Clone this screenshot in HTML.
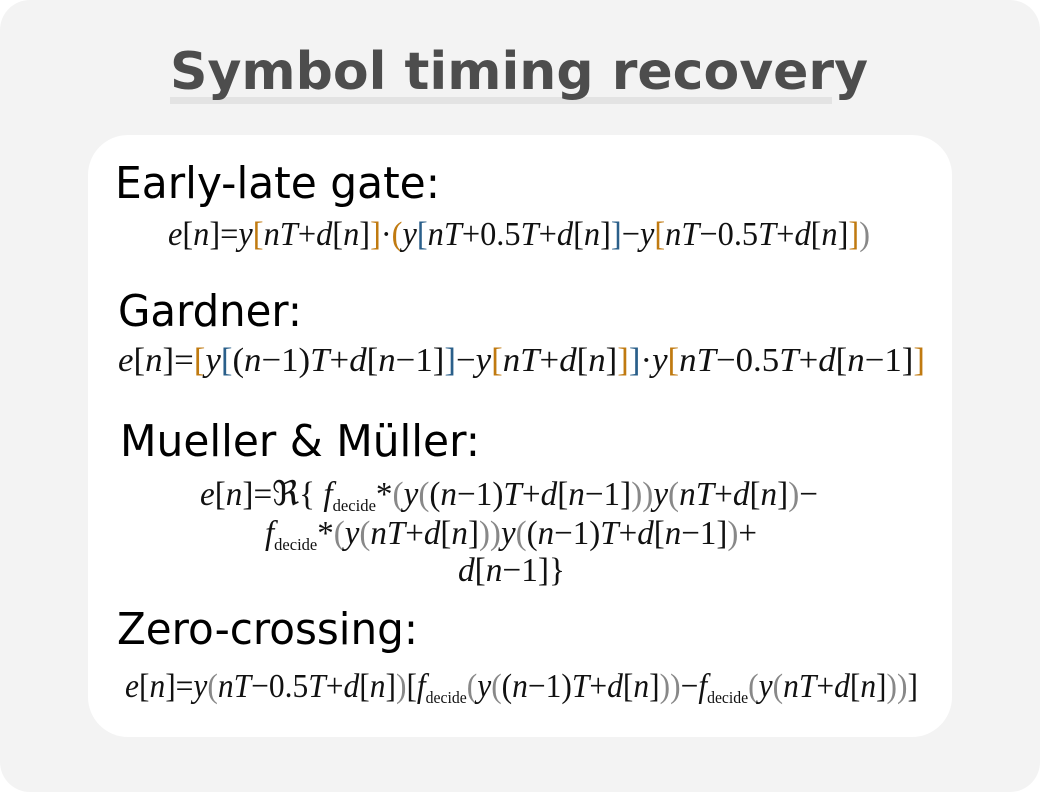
<!DOCTYPE html>
<html><head><meta charset="utf-8"><style>
html,body{margin:0;padding:0;background:#fff}
#bg{position:relative;width:1040px;height:792px;background:#f3f3f3;border-radius:30px;overflow:hidden}
#card{position:absolute;left:88px;top:135px;width:864px;height:602px;background:#fff;border-radius:40px}
.t{position:absolute;white-space:nowrap;transform-origin:0 0;line-height:1}
.title{font:bold 52px "DejaVu Sans",sans-serif;color:#4d4d4d}
.h{font:44px "DejaVu Sans",sans-serif;color:#000}
.f{font:italic 34px "Liberation Serif",serif;color:#111}
.f .u{font-style:normal}
.f sub{font-size:17px;font-style:normal;vertical-align:-6px}
.o{color:#c07a10;font-style:normal;font-weight:300}
.b{color:#2a5f8a;font-style:normal;font-weight:300}
.g{color:#888;font-style:normal;font-weight:300}
#bar{position:absolute;left:170px;top:97px;width:662px;height:7px;background:#e3e3e3}
</style></head><body>
<div id="bg">
<div id="bar"></div>
<div class="t title" data-w="698" style="left:170px;top:42px">Symbol timing recovery</div>
<div id="card"></div>
<div class="t h" data-w="325" style="left:115px;top:158px">Early-late gate:</div>
<div class="t f" data-w="702" style="left:168px;top:216px">e<span class="u">[</span>n<span class="u">]=</span>y<span class="o">[</span>nT<span class="u">+</span>d<span class="u">[</span>n<span class="u">]</span><span class="o">]</span><span class="u">·</span><span class="o">(</span>y<span class="b">[</span>nT<span class="u">+0.5</span>T<span class="u">+</span>d<span class="u">[</span>n<span class="u">]</span><span class="b">]</span><span class="u">−</span>y<span class="o">[</span>nT<span class="u">−0.5</span>T<span class="u">+</span>d<span class="u">[</span>n<span class="u">]</span><span class="o">]</span><span class="g">)</span></div>
<div class="t h" data-w="184" style="left:118px;top:286px">Gardner:</div>
<div class="t f" data-w="807" style="left:118px;top:342px">e<span class="u">[</span>n<span class="u">]=</span><span class="o">[</span>y<span class="b">[</span><span class="u">(</span>n<span class="u">−1)</span>T<span class="u">+</span>d<span class="u">[</span>n<span class="u">−1]</span><span class="b">]</span><span class="u">−</span>y<span class="o">[</span>nT<span class="u">+</span>d<span class="u">[</span>n<span class="u">]</span><span class="o">]</span><span class="b">]</span><span class="u">·</span>y<span class="o">[</span>nT<span class="u">−0.5</span>T<span class="u">+</span>d<span class="u">[</span>n<span class="u">−1]</span><span class="o">]</span></div>
<div class="t h" data-w="360" style="left:120px;top:416px">Mueller &amp; Müller:</div>
<div class="t f" data-w="618" style="left:200px;top:474px">e<span class="u">[</span>n<span class="u">]=ℜ{ </span>f<sub>decide</sub><span class="u">*</span><span class="g">(</span>y<span class="g">(</span><span class="u">(</span>n<span class="u">−1)</span>T<span class="u">+</span>d<span class="u">[</span>n<span class="u">−1]</span><span class="g">))</span>y<span class="g">(</span>nT<span class="u">+</span>d<span class="u">[</span>n<span class="u">]</span><span class="g">)</span><span class="u">−</span></div>
<div class="t f" data-w="492" style="left:265px;top:515px">f<sub>decide</sub><span class="u">*</span><span class="g">(</span>y<span class="g">(</span>nT<span class="u">+</span>d<span class="u">[</span>n<span class="u">]</span><span class="g">))</span>y<span class="g">(</span><span class="u">(</span>n<span class="u">−1)</span>T<span class="u">+</span>d<span class="u">[</span>n<span class="u">−1]</span><span class="g">)</span><span class="u">+</span></div>
<div class="t f" data-w="107" style="left:458px;top:552px">d<span class="u">[</span>n<span class="u">−1]}</span></div>
<div class="t h" data-w="301" style="left:117px;top:604px">Zero-crossing:</div>
<div class="t f" data-w="793" style="left:125px;top:668px">e<span class="u">[</span>n<span class="u">]=</span>y<span class="g">(</span>nT<span class="u">−0.5</span>T<span class="u">+</span>d<span class="u">[</span>n<span class="u">]</span><span class="g">)</span><span class="u">[</span>f<sub>decide</sub><span class="g">(</span>y<span class="g">(</span><span class="u">(</span>n<span class="u">−1)</span>T<span class="u">+</span>d<span class="u">[</span>n<span class="u">]</span><span class="g">))</span><span class="u">−</span>f<sub>decide</sub><span class="g">(</span>y<span class="g">(</span>nT<span class="u">+</span>d<span class="u">[</span>n<span class="u">]</span><span class="g">))</span><span class="u">]</span></div>
</div>
<script>
document.querySelectorAll('[data-w]').forEach(function(e){
  var w=e.getBoundingClientRect().width;
  var s=parseFloat(e.getAttribute('data-w'))/w;
  e.style.transform='scaleX('+s+')';
});
</script>
</body></html>
